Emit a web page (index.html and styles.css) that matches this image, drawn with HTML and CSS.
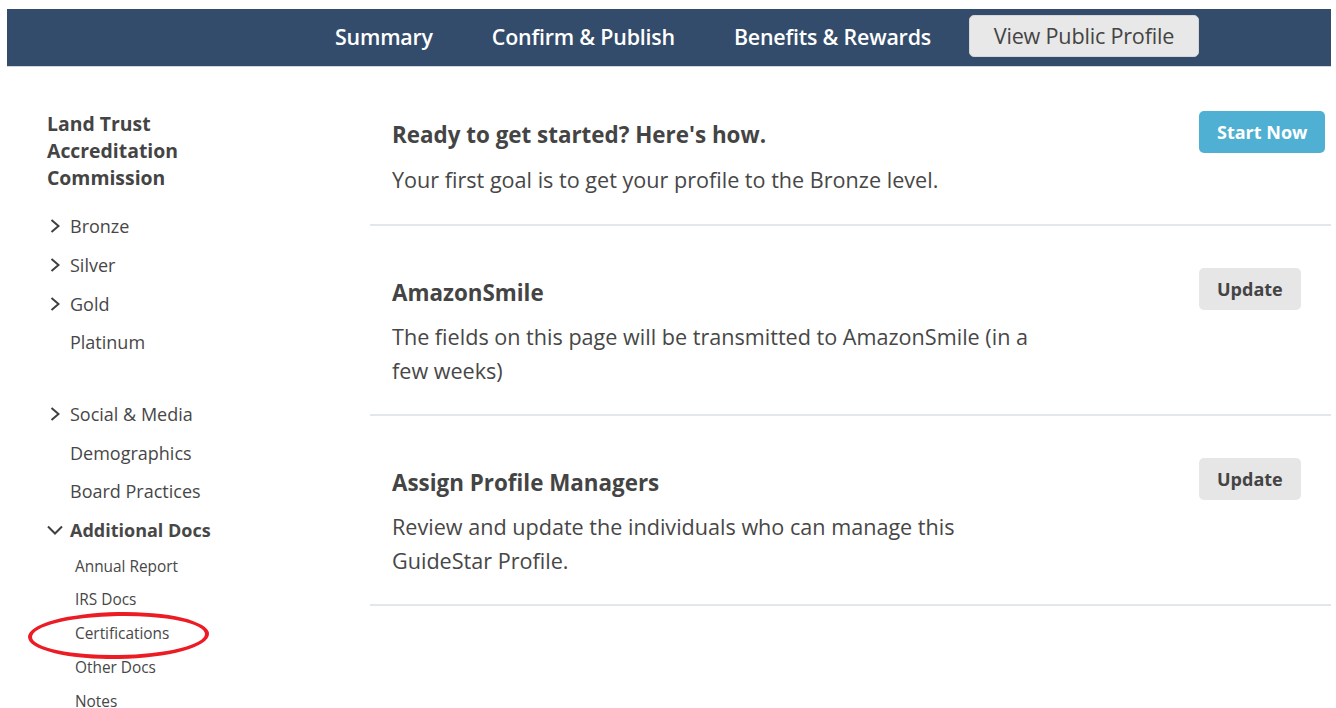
FILE: index.html
```html
<!DOCTYPE html>
<html lang="en">
<head>
<meta charset="utf-8">
<title>Profile Dashboard</title>
<link rel="stylesheet" href="styles.css">
</head>
<body>
<header class="topbar">
  <nav class="topnav">
    <a class="topnav-link" href="#">Summary</a>
    <a class="topnav-link" href="#">Confirm &amp; Publish</a>
    <a class="topnav-link" href="#">Benefits &amp; Rewards</a>
    <a class="topnav-btn" href="#">View Public Profile</a>
  </nav>
</header>

<div class="layout">
  <aside class="sidebar">
    <h2 class="org-name">Land Trust Accreditation Commission</h2>
    <ul class="side-list">
      <li class="side-item"><svg class="chev" viewBox="0 0 10 14"><path d="M1.5 1l7 6-7 6"/></svg>Bronze</li>
      <li class="side-item"><svg class="chev" viewBox="0 0 10 14"><path d="M1.5 1l7 6-7 6"/></svg>Silver</li>
      <li class="side-item"><svg class="chev" viewBox="0 0 10 14"><path d="M1.5 1l7 6-7 6"/></svg>Gold</li>
      <li class="side-item"><span class="chev-space"></span>Platinum</li>
    </ul>
    <ul class="side-list second">
      <li class="side-item"><svg class="chev" viewBox="0 0 10 14"><path d="M1.5 1l7 6-7 6"/></svg>Social &amp; Media</li>
      <li class="side-item"><span class="chev-space"></span>Demographics</li>
      <li class="side-item"><span class="chev-space"></span>Board Practices</li>
      <li class="side-item open"><svg class="chev down" viewBox="0 0 16 10"><path d="M1 1.5l7 7 7-7"/></svg>Additional Docs</li>
    </ul>
    <ul class="sub-list">
      <li class="sub-item">Annual Report</li>
      <li class="sub-item">IRS Docs</li>
      <li class="sub-item circled">Certifications<span class="ring"></span></li>
      <li class="sub-item">Other Docs</li>
      <li class="sub-item">Notes</li>
    </ul>
  </aside>

  <main class="content">
    <section class="task first">
      <div class="task-text">
        <h3 class="task-title">Ready to get started? Here's how.</h3>
        <p class="task-desc">Your first goal is to get your profile to the Bronze level.</p>
      </div>
      <div class="task-action">
        <a class="btn btn-primary" href="#">Start Now</a>
      </div>
    </section>
    <section class="task">
      <div class="task-text">
        <h3 class="task-title">AmazonSmile</h3>
        <p class="task-desc">The fields on this page will be transmitted to AmazonSmile (in a few weeks)</p>
      </div>
      <div class="task-action">
        <a class="btn btn-light" href="#">Update</a>
      </div>
    </section>
    <section class="task">
      <div class="task-text">
        <h3 class="task-title">Assign Profile Managers</h3>
        <p class="task-desc">Review and update the individuals who can manage this GuideStar Profile.</p>
      </div>
      <div class="task-action">
        <a class="btn btn-light" href="#">Update</a>
      </div>
    </section>
  </main>
</div>
</body>
</html>
```

FILE: styles.css
```css
* { box-sizing: border-box; }

body {
  margin: 0;
  padding: 9px 5px 0 7px;
  font-family: "Open Sans", "Noto Sans", sans-serif;
  color: #474747;
  background: #fff;
}

/* top navigation bar */
.topbar {
  background: #334c6b;
  height: 58px;
  padding-top: 6px;
  border-bottom: 1px solid #cfd6df;
}

.topnav {
  display: flex;
  align-items: center;
  height: 42px;
  padding-left: 328px;
}

.topnav-link {
  color: #fff;
  text-decoration: none;
  font-size: 21.4px;
  font-weight: 600;
  margin-right: 59px;
  letter-spacing: -0.2px;
}

.topnav-link:nth-child(3) { margin-right: 38px; }

.topnav-btn {
  display: block;
  width: 230px;
  height: 42px;
  line-height: 40px;
  text-align: center;
  background: #e8e8e8;
  color: #444;
  text-decoration: none;
  font-size: 21.6px;
  border-radius: 5px;
  border: 1px solid #d6d6d6;
  letter-spacing: -0.2px;
}

/* page body */
.layout {
  display: flex;
  padding-top: 43px;
}

.sidebar {
  width: 363px;
  padding-left: 40px;
  flex-shrink: 0;
}

.org-name {
  margin: 0 0 16px;
  font-size: 19.4px;
  line-height: 27px;
  font-weight: 700;
  width: 160px;
  color: #444;
}

.side-list {
  list-style: none;
  margin: 0;
  padding: 0;
}

.side-list.second { margin-top: 33px; }

.side-item {
  display: flex;
  align-items: center;
  height: 38.7px;
  font-size: 18px;
  color: #474747;
}

.side-item.open { font-weight: 700; }

.chev {
  width: 10px;
  height: 14px;
  margin: 0 10px 0 3px;
  fill: none;
  stroke: #3f3f3f;
  stroke-width: 2;
}

.chev.down {
  width: 16px;
  height: 10px;
  margin: 0 7px 0 0;
}

.chev-space {
  display: inline-block;
  width: 23px;
}

.sub-list {
  list-style: none;
  margin: 0;
  padding: 0 0 0 28px;
}

.sub-item {
  height: 33.8px;
  line-height: 33.8px;
  font-size: 15.4px;
  color: #474747;
  position: relative;
}

/* hand-drawn highlight around one entry */
.ring {
  position: absolute;
  left: -47px;
  top: -5px;
  width: 181px;
  height: 47px;
  border: 4px solid #ec1c24;
  border-radius: 50%;
  transform: rotate(-1deg);
}

/* task list */
.content {
  flex: 1;
}

.task {
  display: flex;
  justify-content: space-between;
  align-items: flex-start;
  padding: 42px 0 26px 22px;
  border-bottom: 2px solid #e2e7ee;
}

.task.first { padding-top: 1px; padding-bottom: 27px; }

.task-title {
  margin: 10px 0 0;
  font-size: 22.4px;
  line-height: 30px;
  font-weight: 700;
  color: #444;
}

.task.first .task-title { margin-top: 9px; }

.task-desc {
  margin: 12px 0 0;
  font-size: 21.6px;
  line-height: 34px;
  max-width: 640px;
  color: #474747;
}

.task.first .task-desc { margin-top: 13px; }

.task-action {
  width: 125px;
  margin-right: 7px;
  flex-shrink: 0;
  display: flex;
}

.btn {
  display: block;
  text-decoration: none;
  font-size: 18px;
  font-weight: 700;
  border-radius: 5px;
  height: 42px;
  line-height: 42px;
  padding: 0 18px;
  white-space: nowrap;
}

.btn-primary {
  background: #4fb0d3;
  color: #fff;
}

.btn-light {
  background: #e6e6e6;
  color: #444;
}
```
